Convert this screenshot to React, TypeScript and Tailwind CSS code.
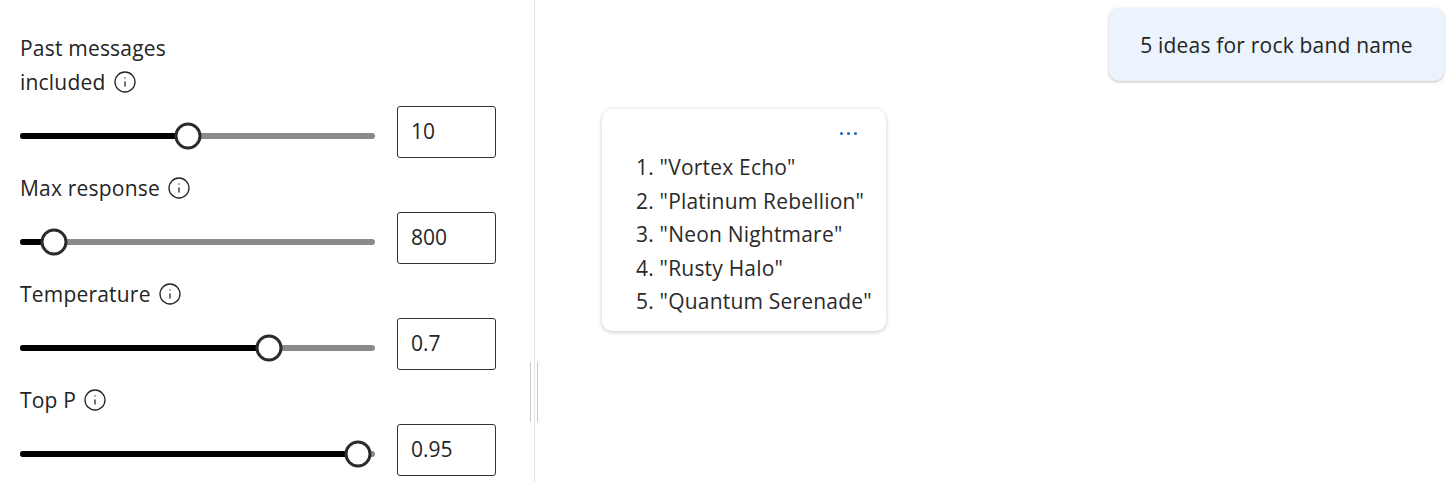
import { Info } from "lucide-react";

type Setting = {
  label: string[];
  value: string;
  pos: number; // thumb centre, px from track start
};

const settings: Setting[] = [
  { label: ["Past messages", "included"], value: "10", pos: 168 },
  { label: ["Max response"], value: "800", pos: 34 },
  { label: ["Temperature"], value: "0.7", pos: 249 },
  { label: ["Top P"], value: "0.95", pos: 338 },
];

const answers = [
  '"Vortex Echo"',
  '"Platinum Rebellion"',
  '"Neon Nightmare"',
  '"Rusty Halo"',
  '"Quantum Serenade"',
];

function Slider({ pos }: { pos: number }) {
  return (
    <div className="relative h-[6px] w-[355px] rounded-full bg-[#8a8a8a]">
      <div
        className="h-full rounded-full bg-black"
        style={{ width: pos }}
      />
      <div
        className="absolute top-1/2 h-[27px] w-[27px] -translate-x-1/2 -translate-y-1/2 rounded-full border-[3px] border-[#2b2b2b] bg-white"
        style={{ left: pos }}
      />
    </div>
  );
}

function SettingRow({ s }: { s: Setting }) {
  return (
    <div className="flex flex-col">
      <div className="mb-[7px] text-[21px] leading-[34px] tracking-[0.2px] text-[#242424]">
        {s.label.map((line, i) => (
          <div key={i} className="flex items-center gap-[7px]">
            <span>{line}</span>
            {i === s.label.length - 1 && (
              <Info size={24} strokeWidth={1.3} className="text-[#242424]" />
            )}
          </div>
        ))}
      </div>
      <div className="flex items-start gap-[22px]">
        <div className="flex h-[52px] items-center pt-2">
          <Slider pos={s.pos} />
        </div>
        <div className="flex h-[52px] w-[99px] items-center rounded-[3px] border-[1.5px] border-[#333] pl-[13px] text-[21px] text-[#242424]">
          {s.value}
        </div>
      </div>
    </div>
  );
}

export default function App() {
  return (
    <div
      className="flex h-[482px] w-full overflow-hidden bg-white"
      style={{ fontFamily: '"Open Sans", "Noto Sans", sans-serif' }}
    >
      {/* settings panel */}
      <div className="relative w-[535px] shrink-0 border-r border-[#e1e1e1] pl-5 pt-[31px]">
        <div className="flex flex-col gap-[13px]">
          {settings.map((s) => (
            <SettingRow key={s.value} s={s} />
          ))}
        </div>
        {/* splitter grip */}
        <div className="absolute right-[-4px] top-[362px] flex h-[60px] gap-[6px]">
          <div className="w-px bg-[#c8c8c8]" />
          <div className="w-px bg-[#c8c8c8]" />
        </div>
      </div>

      {/* chat */}
      <div className="flex flex-1 flex-col pl-[67px] pr-3 pt-2">
        <div className="flex justify-end">
          <div className="flex h-[73px] w-[335px] items-center justify-center rounded-[10px] bg-[#ebf3fc] pt-[2px] text-[21px] tracking-[0.2px] text-[#242424] shadow-[0_1px_3px_rgba(0,0,0,0.25)]">
            5 ideas for rock band name
          </div>
        </div>
        <div className="mt-[28px] w-[284px] rounded-[10px] bg-white pb-3 pl-[34px] pr-4 pt-4 shadow-[0_1px_4px_rgba(0,0,0,0.22)]">
          <div className="flex h-4 items-center justify-end gap-[4px] pr-[13px]">
            <span className="h-[3px] w-[3px] rounded-full bg-[#0f6cbd]" />
            <span className="h-[3px] w-[3px] rounded-full bg-[#0f6cbd]" />
            <span className="h-[3px] w-[3px] rounded-full bg-[#0f6cbd]" />
          </div>
          <ol className="mt-[10px] text-[21px] leading-[33.5px] tracking-[0.2px] text-[#2a2a2a]">
            {answers.map((a, i) => (
              <li key={a} className="whitespace-nowrap">
                {i + 1}. {a}
              </li>
            ))}
          </ol>
        </div>
      </div>
    </div>
  );
}
